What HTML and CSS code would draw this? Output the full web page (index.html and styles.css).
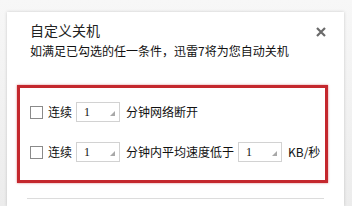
FILE: index.html
```html
<!DOCTYPE html>
<html lang="zh-CN">
<head>
<meta charset="utf-8">
<link rel="stylesheet" href="styles.css">
</head>
<body>
<div class="dialog">
  <div class="header">
    <div class="title">自定义关机</div>
    <svg class="close" width="10" height="10" viewBox="0 0 10 10"><path d="M1 1 L9 9 M9 1 L1 9" stroke="#6a6a6a" stroke-width="2.2" stroke-linecap="butt"/></svg>
  </div>
  <div class="subtitle">如满足已勾选的任一条件，迅雷7将为您自动关机</div>
  <div class="box">
    <div class="row">
      <span class="check"></span>
      <span class="label">连续</span>
      <span class="select"><span class="val">1</span><span class="tri"></span></span>
      <span class="label">分钟网络断开</span>
    </div>
    <div class="row">
      <span class="check"></span>
      <span class="label">连续</span>
      <span class="select"><span class="val">1</span><span class="tri"></span></span>
      <span class="label">分钟内平均速度低于</span>
      <span class="select"><span class="val">1</span><span class="tri"></span></span>
      <span class="label">KB/秒</span>
    </div>
  </div>
  <div class="sep"></div>
</div>
</body>
</html>
```
FILE: styles.css
```css
html, body {
  margin: 0;
  padding: 0;
}
body {
  width: 352px;
  height: 206px;
  overflow: hidden;
  background: linear-gradient(#f7f7f7, #ececec);
  font-family: "Noto Sans CJK SC", "Liberation Sans", sans-serif;
  color: #1a1a1a;
}
.dialog {
  margin: 12px 0 0 7px;
  width: 337px;
  height: 194px;
  background: #fff;
  box-shadow: 0 0 3px rgba(0,0,0,0.18);
  padding-top: 9px;
  box-sizing: border-box;
}
.header {
  display: flex;
  justify-content: space-between;
  align-items: center;
  padding: 0 18px 0 23px;
  height: 18px;
}
.title {
  font-size: 14px;
  line-height: 18px;
  color: #222;
}
.close {
  display: block;
  margin-top: 4px;
}
.subtitle {
  margin: 4px 0 0 23px;
  font-size: 12px;
  line-height: 16px;
  color: #111;
}
.box {
  margin: 26px 0 0 10px;
  width: 311px;
  height: 98px;
  box-sizing: border-box;
  border: 3px solid #c4282e;
  box-shadow: 0 0 2px rgba(196,40,46,0.6);
  padding: 14px 0 0 10px;
  display: flex;
  flex-direction: column;
  gap: 20px;
}
.row {
  display: flex;
  align-items: center;
  height: 20px;
}
.check {
  width: 11px;
  height: 11px;
  border: 1px solid #8a8a8a;
  background: #fff;
  margin-right: 5px;
}
.label {
  font-size: 12px;
  line-height: 20px;
  color: #111;
  margin-right: 4px;
}
.select {
  position: relative;
  width: 44px;
  height: 20px;
  box-sizing: border-box;
  border: 1px solid #d2d2d2;
  background: #fff;
  margin-right: 6px;
  display: flex;
  align-items: center;
}
.val {
  font-family: "Liberation Serif", serif;
  font-size: 12px;
  margin-left: 7px;
  color: #111;
}
.tri {
  position: absolute;
  right: 4px;
  bottom: 5px;
  width: 0;
  height: 0;
  border-left: 5px solid transparent;
  border-bottom: 5px solid #a8a8a8;
}
.sep {
  margin: 15px 0 0 20px;
  width: 297px;
  height: 1px;
  background: #dcdcdc;
}
```
